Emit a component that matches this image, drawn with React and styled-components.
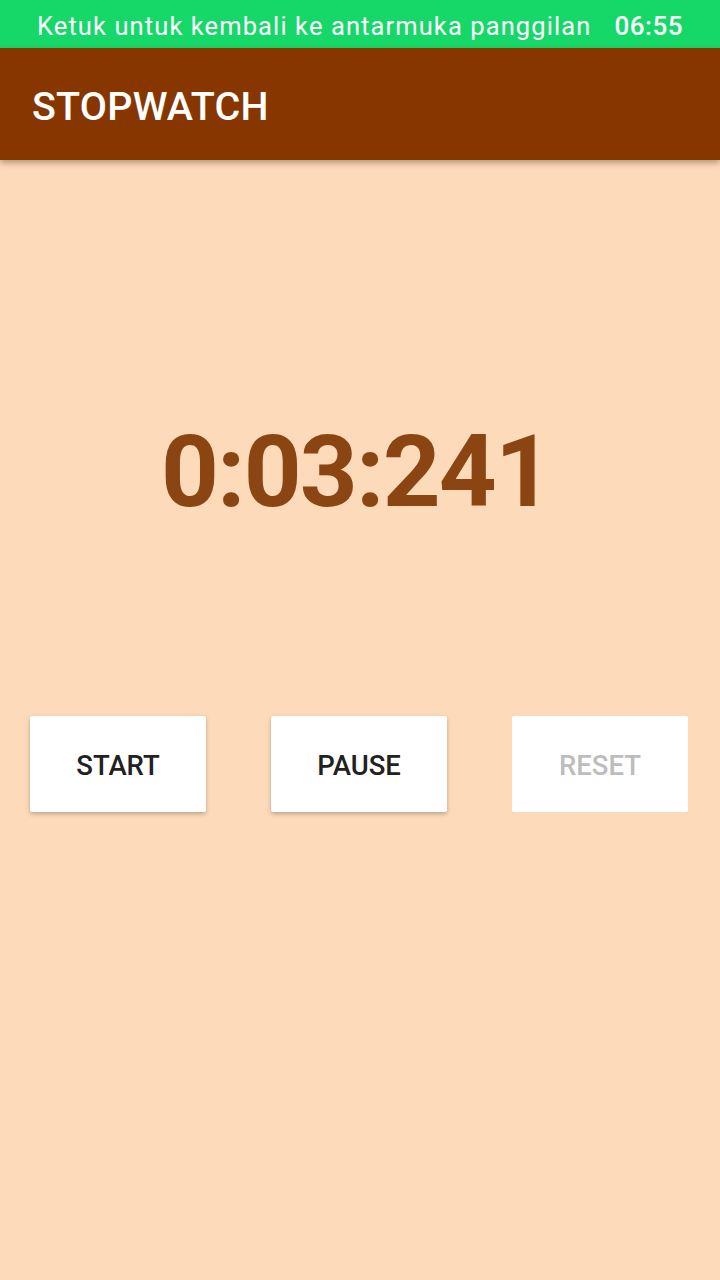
import styled, { createGlobalStyle } from 'styled-components'

const GlobalStyle = createGlobalStyle`
    html, body {
        margin: 0;
        padding: 0;
        background: #fddab9;
        font-family: Roboto, "Liberation Sans", sans-serif;
    }
`

const Screen = styled.div`
    display: flex;
    flex-direction: column;
    width: 720px;
    height: 1280px;
    background-color: #fddab9;
    overflow: hidden;
`

const StatusBar = styled.div`
    display: flex;
    align-items: center;
    justify-content: space-between;
    height: 48px;
    padding: 3px 37px 0 37px;
    background-color: #16d868;
    color: #ffffff;
    font-size: 25.5px;
    letter-spacing: 1.1px;
    box-sizing: border-box;
`

const StatusTime = styled.span`
    font-weight: 500;
    font-size: 26px;
    letter-spacing: 0.5px;
`

const AppBar = styled.header`
    display: flex;
    align-items: center;
    height: 112px;
    padding: 5px 32px 0;
    box-sizing: border-box;
    background-color: #873600;
    color: #ffffff;
    font-size: 39.5px;
    font-weight: 500;
    letter-spacing: 0.2px;
    box-shadow: 0 3px 6px rgba(0, 0, 0, 0.3);
    position: relative;
    z-index: 1;
`

const Content = styled.main`
    display: flex;
    flex-direction: column;
    flex: 1;
`

const Timer = styled.div`
    display: flex;
    justify-content: center;
    margin-top: 252px;
    padding-right: 8px;
    color: #8b4513;
    font-size: 101px;
    font-weight: 700;
    letter-spacing: -1.8px;
    line-height: 120px;
`

const ButtonRow = styled.div`
    display: flex;
    justify-content: space-between;
    padding: 0 32px 0 30px;
    margin-top: 184px;
`

const Button = styled.button`
    width: 176px;
    height: 96px;
    padding-top: 4px;
    border: none;
    background-color: #ffffff;
    font-family: Roboto, "Liberation Sans", sans-serif;
    font-size: 27.5px;
    font-weight: 500;
    color: ${({ disabled }) => (disabled ? '#bdbdbd' : '#212121')};
    box-shadow: ${({ disabled }) =>
        disabled ? 'none' : '0 2px 4px rgba(0, 0, 0, 0.25)'};
    border-radius: 2px;
`

function App() {
    return (
        <Screen>
            <GlobalStyle />
            <StatusBar>
                <span>Ketuk untuk kembali ke antarmuka panggilan</span>
                <StatusTime>06:55</StatusTime>
            </StatusBar>
            <AppBar>STOPWATCH</AppBar>
            <Content>
                <Timer>0:03:241</Timer>
                <ButtonRow>
                    <Button>START</Button>
                    <Button>PAUSE</Button>
                    <Button disabled>RESET</Button>
                </ButtonRow>
            </Content>
        </Screen>
    )
}

export default App
